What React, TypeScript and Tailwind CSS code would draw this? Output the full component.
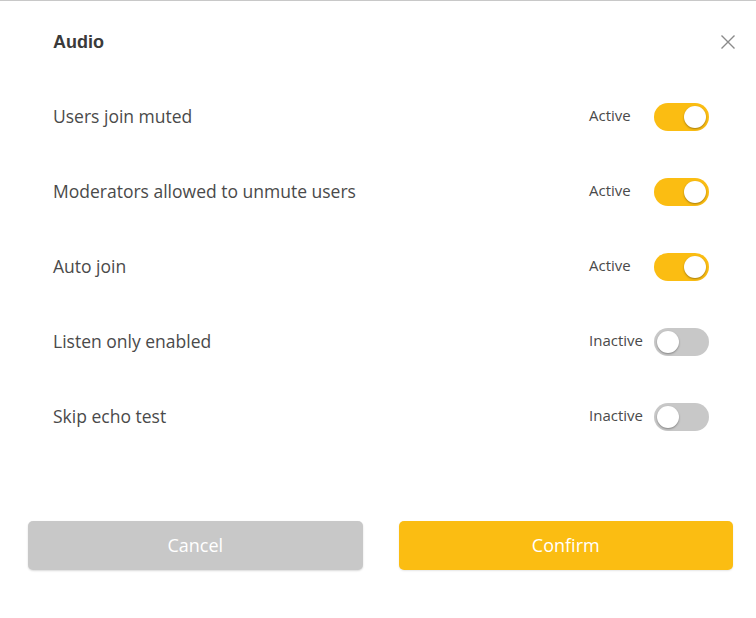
import { useState } from 'react';

type Setting = { label: string; on: boolean };

const initialSettings: Setting[] = [
  { label: 'Users join muted', on: true },
  { label: 'Moderators allowed to unmute users', on: true },
  { label: 'Auto join', on: true },
  { label: 'Listen only enabled', on: false },
  { label: 'Skip echo test', on: false },
];

function Toggle({ on, onClick }: { on: boolean; onClick: () => void }) {
  return (
    <button
      onClick={onClick}
      className={`relative h-[28px] w-[55px] rounded-full ${on ? 'bg-[#fbbd12]' : 'bg-[#c8c8c8]'}`}
    >
      <span
        className={`absolute top-[3px] h-[22px] w-[22px] rounded-full bg-white shadow-[0_1px_2px_rgba(0,0,0,0.35)] ${on ? 'left-[30px]' : 'left-[3px]'}`}
      />
    </button>
  );
}

export default function App() {
  const [settings, setSettings] = useState(initialSettings);

  const toggle = (i: number) =>
    setSettings(prev => prev.map((s, idx) => (idx === i ? { ...s, on: !s.on } : s)));

  return (
    <div
      className="h-[618px] w-[756px] border-t border-[#c8c8c8] bg-white"
      style={{ fontFamily: '"Open Sans", "Noto Sans", sans-serif' }}
    >
      <div className="flex h-[78px] items-center justify-between pt-[4px] pl-[53px] pr-[20px]">
        <h2
          className="text-[18px] font-bold text-[#3a3a3a]"
          style={{ fontFamily: '"Liberation Sans", Arial, sans-serif' }}
        >
          Audio
        </h2>
        <button className="text-[#8a8a8a]">
          <svg width="16" height="16" viewBox="0 0 16 16" fill="none" stroke="currentColor" strokeWidth="1.4">
            <path d="M1.5 1.5L14.5 14.5M14.5 1.5L1.5 14.5" />
          </svg>
        </button>
      </div>

      <div className="flex flex-col pl-[53px] pr-[47px]">
        {settings.map((s, i) => (
          <div key={s.label} className="flex h-[75px] items-center justify-between">
            <span className="text-[17.5px] text-[#4a4a4a]">{s.label}</span>
            <div className="flex items-center">
              <span className="w-[65px] pb-[3px] text-[15px] text-[#4a4a4a]">{s.on ? 'Active' : 'Inactive'}</span>
              <Toggle on={s.on} onClick={() => toggle(i)} />
            </div>
          </div>
        ))}
      </div>

      <div className="mt-[67px] flex gap-[36px] pl-[28px] pr-[23px]">
        <button className="h-[49px] flex-1 rounded-[5px] bg-[#c8c8c8] text-[18px] text-white shadow-[0_1px_2px_rgba(0,0,0,0.15)]">
          Cancel
        </button>
        <button className="h-[49px] flex-1 rounded-[5px] bg-[#fbbd12] text-[18px] text-white shadow-[0_1px_2px_rgba(0,0,0,0.1)]">
          Confirm
        </button>
      </div>
    </div>
  );
}
